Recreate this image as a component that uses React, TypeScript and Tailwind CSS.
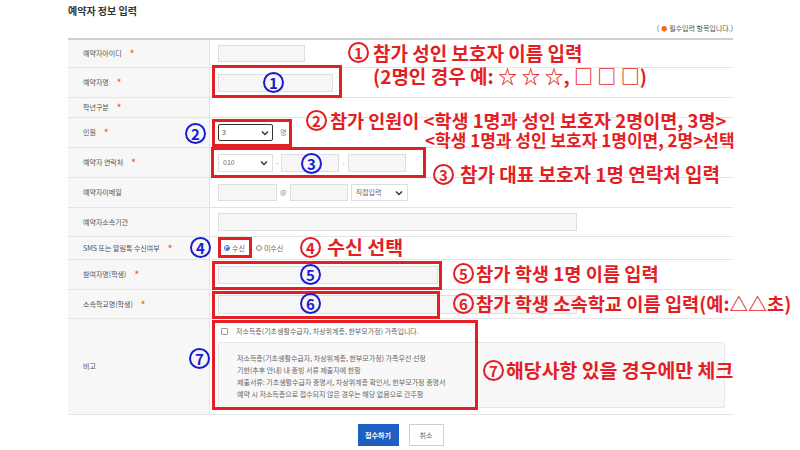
import React from "react";

// -----------------------------------------------------------------------------------

const FONT = "font-['Noto_Sans_CJK_KR','Noto_Sans',sans-serif]";

function Chevron() {
  return (
    <svg width="8" height="6" viewBox="0 0 8 6" className="ml-auto">
      <path d="M1 1.5 L4 4.5 L7 1.5" fill="none" stroke="#333" strokeWidth="1.4" />
    </svg>
  );
}

function Label({ text, required = true }: { text: string; required?: boolean }) {
  return (
    <div className="w-[142px] shrink-0 bg-[#f7f7f7] border-r border-[#e4e4e4] pl-[15px] flex items-center text-[7px] text-[#555]">
      <span>{text}</span>
      {required && <span className="ml-[8px] text-[#f26b1d] text-[9px] font-bold leading-none">*</span>}
    </div>
  );
}

function Row({ label, h, required, children }: { label: string; h: string; required?: boolean; children?: React.ReactNode }) {
  return (
    <div className={`flex border-b border-[#e4e4e4] ${h}`}>
      <Label text={label} required={required} />
      <div className="flex-1 pl-[8px] flex items-center">{children}</div>
    </div>
  );
}

function Input({ w, h = "h-[18px]" }: { w: string; h?: string }) {
  return <div className={`${w} ${h} bg-[#f6f6f6] border border-[#dedede]`} />;
}

function BlueNum({ n, x, y }: { n: number; x: string; y: string }) {
  return (
    <div className={`absolute ${x} ${y} w-[21px] h-[21px] rounded-full border-2 border-[#1c1ccf] text-[#1c1ccf] text-[15px] font-bold flex items-center justify-center leading-none`}>
      {n}
    </div>
  );
}

function RedNum({ n }: { n: number }) {
  return (
    <span className="inline-flex w-[21px] h-[21px] rounded-full border-[2.5px] border-[#e31e24] text-[15px] font-bold items-center justify-center leading-none shrink-0">
      {n}
    </span>
  );
}

// -----------------------------------------------------------------------------------

export default function App() {
  return (
    <div className={`relative w-[800px] h-[450px] bg-white overflow-hidden ${FONT}`}>
      <div className="pl-[68px] pr-[67px] pt-[4px]">
        {/* Title */}
        <h2 className="text-[10px] leading-[13px] font-bold text-[#333]">예약자 정보 입력</h2>
        <div className="h-[21px] flex items-end justify-end pb-[5px] text-[7px] leading-[9px] text-[#555]">
          (<span className="text-[#f26b1d] text-[6px] mx-[2px]">●</span>필수입력 항목입니다.)
        </div>

        {/* Form table */}
        <div className="border-t-2 border-[#cfcfcf]">
          <Row label="예약자아이디" h="h-[28px]">
            <Input w="w-[87px]" h="h-[17px]" />
          </Row>
          <Row label="예약자명" h="h-[30px]">
            <Input w="w-[115px]" />
          </Row>
          <Row label="학년구분" h="h-[20px]" />
          <Row label="인원" h="h-[30px]">
            <div className="w-[55px] h-[17px] border border-[#333] rounded-[2px] bg-white flex items-center px-[3px] text-[7px] text-[#555]">
              3<Chevron />
            </div>
            <span className="ml-[7px] text-[7px] text-[#888]">명</span>
          </Row>
          <Row label="예약자 연락처" h="h-[30px]">
            <div className="w-[55px] h-[18px] border border-[#dedede] bg-white flex items-center px-[4px] text-[7px] text-[#666]">
              010<Chevron />
            </div>
            <span className="mx-[3px] text-[7px] text-[#999]">-</span>
            <Input w="w-[58px]" />
            <span className="mx-[3px] text-[7px] text-[#999]">-</span>
            <Input w="w-[58px]" />
          </Row>
          <Row label="예약자이메일" h="h-[30px]" required={false}>
            <Input w="w-[59px]" h="h-[17px]" />
            <span className="mx-[3px] text-[7px] text-[#888]">@</span>
            <Input w="w-[58px]" h="h-[17px]" />
            <div className="ml-[3px] w-[57px] h-[17px] border border-[#dedede] bg-white flex items-center px-[4px] text-[7px] text-[#666]">
              직접입력<Chevron />
            </div>
          </Row>
          <Row label="예약자소속기관" h="h-[29px]" required={false}>
            <Input w="w-[359px]" />
          </Row>
          <Row label="SMS 또는 알림톡 수신여부" h="h-[23px]">
            <div className="flex items-center text-[7px] text-[#666] pl-[6px]">
              <span className="w-[6px] h-[6px] rounded-full border border-[#2a6fd6] flex items-center justify-center mr-[2px]">
                <span className="w-[3px] h-[3px] rounded-full bg-[#2a6fd6]" />
              </span>
              수신
              <span className="ml-[11px] w-[6px] h-[6px] rounded-full border border-[#888] mr-[2px]" />
              미수신
            </div>
          </Row>
          <Row label="참여자명(학생)" h="h-[30px]">
            <Input w="w-[220px]" />
          </Row>
          <Row label="소속학교명(학생)" h="h-[29px]">
            <Input w="w-[359px]" h="h-[19px]" />
          </Row>
          <div className="flex border-b border-[#e4e4e4] h-[96px]">
            <div className="w-[142px] shrink-0 bg-[#f7f7f7] border-r border-[#e4e4e4] pl-[15px] flex items-center text-[7px] text-[#555]">
              비고
            </div>
            <div className="flex-1 pl-[8px] pt-[7px] flex flex-col">
              <div className="flex items-center text-[7px] text-[#666] h-[10px] pl-[3px]">
                <span className="w-[7px] h-[7px] border border-[#999] rounded-[1px] mr-[8px]" />
                저소득층(기초생활수급자, 차상위계층, 한부모가정) 가족입니다.
              </div>
              <div className="mt-[6px] w-[507px] h-[66px] bg-[#f8f8f8] border border-[#e6e6e6] rounded-[2px] pl-[18px] pt-[9px] text-[7px] leading-[12px] text-[#666]">
                <p>저소득층(기초생활수급자, 차상위계층, 한부모가정) 가족우선 선정</p>
                <p>기한(추후 안내) 내 증빙 서류 제출자에 한함</p>
                <p>제출서류: 기초생활수급자 증명서, 차상위계층 확인서, 한부모가정 증명서</p>
                <p>예약 시 저소득층으로 접수되지 않은 경우는 해당 없음으로 간주함</p>
              </div>
            </div>
          </div>
        </div>

        {/* Buttons */}
        <div className="mt-[9px] flex justify-center gap-[10px]">
          <button className="w-[41px] h-[22px] bg-[#1f5fc4] text-white text-[7px] font-bold">접수하기</button>
          <button className="w-[35px] h-[22px] bg-white border border-[#cfcfcf] text-[#666] text-[7px]">취소</button>
        </div>
      </div>

      {/* Annotation overlays: red boxes */}
      <div className="absolute left-[212px] top-[65px] w-[130px] h-[33px] border-[3px] border-[#e31e24]" />
      <div className="absolute left-[212px] top-[119px] w-[80px] h-[28px] border-[3px] border-[#e31e24]" />
      <div className="absolute left-[211px] top-[147px] w-[215px] h-[31px] border-[3px] border-[#e31e24]" />
      <div className="absolute left-[218px] top-[237px] w-[34px] h-[21px] border-[3px] border-[#e31e24]" />
      <div className="absolute left-[212px] top-[261px] w-[230px] h-[29px] border-[3px] border-[#e31e24]" />
      <div className="absolute left-[212px] top-[291px] w-[228px] h-[28px] border-[3px] border-[#e31e24]" />
      <div className="absolute left-[212px] top-[320px] w-[266px] h-[90px] border-[3px] border-[#e31e24]" />

      {/* Annotation overlays: blue numbers */}
      <BlueNum n={1} x="left-[263px]" y="top-[72px]" />
      <BlueNum n={2} x="left-[185px]" y="top-[123px]" />
      <BlueNum n={3} x="left-[301px]" y="top-[153px]" />
      <BlueNum n={4} x="left-[190px]" y="top-[237px]" />
      <BlueNum n={5} x="left-[300px]" y="top-[264px]" />
      <BlueNum n={6} x="left-[300px]" y="top-[293px]" />
      <BlueNum n={7} x="left-[189px]" y="top-[348px]" />

      {/* Annotation overlays: red notes */}
      <div className="absolute left-[348px] top-[41px] text-[#e31e24] text-[19px] font-bold leading-[23px]">
        <div className="flex items-center gap-[4px]"><RedNum n={1} />참가 성인 보호자 이름 입력</div>
        <div className="pl-[25px]">(2명인 경우 예: ☆ ☆ ☆, □ □ □)</div>
      </div>
      <div className="absolute left-[306px] top-[110px] text-[#e31e24] font-bold">
        <div className="flex items-center gap-[3px] text-[18.5px] leading-[19px]"><RedNum n={2} />참가 인원이 &lt;학생 1명과 성인 보호자 2명이면, 3명&gt;</div>
        <div className="pl-[119px] text-[17px] leading-[18px]">&lt;학생 1명과 성인 보호자 1명이면, 2명&gt;선택</div>
      </div>
      <div className="absolute left-[433px] top-[163px] text-[#e31e24] text-[19px] font-bold leading-[22px] flex items-center gap-[6px]">
        <RedNum n={3} />참가 대표 보호자 1명 연락처 입력
      </div>
      <div className="absolute left-[300px] top-[236px] text-[#e31e24] text-[19.5px] font-bold leading-[22px] flex items-center gap-[6px]">
        <RedNum n={4} />수신 선택
      </div>
      <div className="absolute left-[453px] top-[262px] text-[#e31e24] text-[18.7px] font-bold leading-[22px] flex items-center gap-[2px]">
        <RedNum n={5} />참가 학생 1명 이름 입력
      </div>
      <div className="absolute left-[453px] top-[292px] text-[#e31e24] text-[18.7px] font-bold leading-[22px] flex items-center gap-[2px]">
        <RedNum n={6} />참가 학생 소속학교 이름 입력(예:△△초)
      </div>
      <div className="absolute left-[483px] top-[359px] text-[#e31e24] text-[19.4px] font-bold leading-[22px] flex items-center gap-[2px]">
        <RedNum n={7} />해당사항 있을 경우에만 체크
      </div>
    </div>
  );
}
